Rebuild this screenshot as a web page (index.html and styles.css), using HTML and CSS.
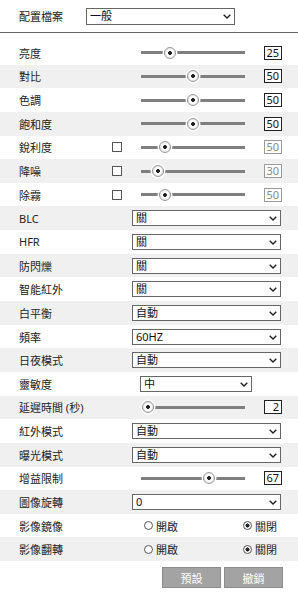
FILE: index.html
```html
<!DOCTYPE html>
<html lang="zh-Hant">
<head>
<meta charset="utf-8">
<title>影像設定</title>
<link rel="stylesheet" href="styles.css">
</head>
<body>
<div class="profile">
  <span class="plabel">配置檔案</span>
  <div class="sel sel-top">
    <select><option>一般</option></select>
    <svg class="chev" width="8" height="5" viewBox="0 0 8 5"><path d="M0.7 0.7 L4 4 L7.3 0.7" fill="none" stroke="#222" stroke-width="1.4"/></svg>
  </div>
</div>

<div class="rows">
  <div class="row">
    <span class="label">亮度</span><span class="slot"></span>
    <input class="rng" type="range" min="0" max="100" value="25">
    <span class="val">25</span>
  </div>
  <div class="row">
    <span class="label">對比</span><span class="slot"></span>
    <input class="rng" type="range" min="0" max="100" value="50">
    <span class="val">50</span>
  </div>
  <div class="row">
    <span class="label">色調</span><span class="slot"></span>
    <input class="rng" type="range" min="0" max="100" value="50">
    <span class="val">50</span>
  </div>
  <div class="row">
    <span class="label">飽和度</span><span class="slot"></span>
    <input class="rng" type="range" min="0" max="100" value="50">
    <span class="val">50</span>
  </div>
  <div class="row">
    <span class="label">銳利度</span><span class="slot"><input class="chk" type="checkbox"></span>
    <input class="rng" type="range" min="0" max="255" value="50">
    <span class="val off">50</span>
  </div>
  <div class="row">
    <span class="label">降噪</span><span class="slot"><input class="chk" type="checkbox"></span>
    <input class="rng" type="range" min="0" max="255" value="30">
    <span class="val off">30</span>
  </div>
  <div class="row">
    <span class="label">除霧</span><span class="slot"><input class="chk" type="checkbox"></span>
    <input class="rng" type="range" min="0" max="255" value="50">
    <span class="val off">50</span>
  </div>
  <div class="row">
    <span class="label wide">BLC</span>
    <div class="sel"><select><option>關</option></select><svg class="chev" width="8" height="5" viewBox="0 0 8 5"><path d="M0.7 0.7 L4 4 L7.3 0.7" fill="none" stroke="#222" stroke-width="1.4"/></svg></div>
  </div>
  <div class="row">
    <span class="label wide">HFR</span>
    <div class="sel"><select><option>關</option></select><svg class="chev" width="8" height="5" viewBox="0 0 8 5"><path d="M0.7 0.7 L4 4 L7.3 0.7" fill="none" stroke="#222" stroke-width="1.4"/></svg></div>
  </div>
  <div class="row">
    <span class="label wide">防閃爍</span>
    <div class="sel"><select><option>關</option></select><svg class="chev" width="8" height="5" viewBox="0 0 8 5"><path d="M0.7 0.7 L4 4 L7.3 0.7" fill="none" stroke="#222" stroke-width="1.4"/></svg></div>
  </div>
  <div class="row">
    <span class="label wide">智能紅外</span>
    <div class="sel"><select><option>關</option></select><svg class="chev" width="8" height="5" viewBox="0 0 8 5"><path d="M0.7 0.7 L4 4 L7.3 0.7" fill="none" stroke="#222" stroke-width="1.4"/></svg></div>
  </div>
  <div class="row">
    <span class="label wide">白平衡</span>
    <div class="sel"><select><option>自動</option></select><svg class="chev" width="8" height="5" viewBox="0 0 8 5"><path d="M0.7 0.7 L4 4 L7.3 0.7" fill="none" stroke="#222" stroke-width="1.4"/></svg></div>
  </div>
  <div class="row">
    <span class="label wide">頻率</span>
    <div class="sel"><select><option>60HZ</option></select><svg class="chev" width="8" height="5" viewBox="0 0 8 5"><path d="M0.7 0.7 L4 4 L7.3 0.7" fill="none" stroke="#222" stroke-width="1.4"/></svg></div>
  </div>
  <div class="row">
    <span class="label wide">日夜模式</span>
    <div class="sel"><select><option>自動</option></select><svg class="chev" width="8" height="5" viewBox="0 0 8 5"><path d="M0.7 0.7 L4 4 L7.3 0.7" fill="none" stroke="#222" stroke-width="1.4"/></svg></div>
  </div>
  <div class="row">
    <span class="label wider">靈敏度</span>
    <div class="sel sel-short"><select><option>中</option></select><svg class="chev" width="8" height="5" viewBox="0 0 8 5"><path d="M0.7 0.7 L4 4 L7.3 0.7" fill="none" stroke="#222" stroke-width="1.4"/></svg></div>
  </div>
  <div class="row">
    <span class="label">延遲時間 (秒)</span><span class="slot"></span>
    <input class="rng" type="range" min="0" max="255" value="2">
    <span class="val">2</span>
  </div>
  <div class="row">
    <span class="label wide">紅外模式</span>
    <div class="sel"><select><option>自動</option></select><svg class="chev" width="8" height="5" viewBox="0 0 8 5"><path d="M0.7 0.7 L4 4 L7.3 0.7" fill="none" stroke="#222" stroke-width="1.4"/></svg></div>
  </div>
  <div class="row">
    <span class="label wide">曝光模式</span>
    <div class="sel"><select><option>自動</option></select><svg class="chev" width="8" height="5" viewBox="0 0 8 5"><path d="M0.7 0.7 L4 4 L7.3 0.7" fill="none" stroke="#222" stroke-width="1.4"/></svg></div>
  </div>
  <div class="row">
    <span class="label">增益限制</span><span class="slot"></span>
    <input class="rng" type="range" min="0" max="100" value="67">
    <span class="val">67</span>
  </div>
  <div class="row">
    <span class="label wide">圖像旋轉</span>
    <div class="sel"><select><option>0</option></select><svg class="chev" width="8" height="5" viewBox="0 0 8 5"><path d="M0.7 0.7 L4 4 L7.3 0.7" fill="none" stroke="#222" stroke-width="1.4"/></svg></div>
  </div>
  <div class="row">
    <span class="label radio-label">影像鏡像</span>
    <label class="opt"><input class="rad" type="radio" name="mirror">開啟</label>
    <label class="opt"><input class="rad" type="radio" name="mirror" checked>關閉</label>
  </div>
  <div class="row">
    <span class="label radio-label">影像翻轉</span>
    <label class="opt"><input class="rad" type="radio" name="flip">開啟</label>
    <label class="opt"><input class="rad" type="radio" name="flip" checked>關閉</label>
  </div>
</div>

<div class="actions">
  <button class="btn">預設</button>
  <button class="btn">撤銷</button>
</div>
</body>
</html>
```

FILE: styles.css
```css
html, body {
  margin: 0;
  padding: 0;
  background: #fff;
}
body {
  width: 298px;
  overflow: hidden;
  font-family: "Noto Sans", "Noto Sans CJK TC", sans-serif;
  font-size: 11px;
  color: #222;
}

.profile {
  display: flex;
  align-items: center;
  height: 33px;
  padding-left: 19px;
  border-bottom: 1px solid #666;
  box-sizing: border-box;
}
.plabel {
  width: 67px;
}

.sel {
  position: relative;
  display: inline-block;
  width: 149px;
  height: 16px;
}
.sel select {
  -webkit-appearance: none;
  appearance: none;
  display: block;
  width: 100%;
  height: 100%;
  margin: 0;
  padding: 0 0 0 3px;
  border: 1px solid #666;
  border-radius: 0;
  background: #fff;
  font-family: "Noto Sans", "Noto Sans CJK TC", sans-serif;
  font-size: 11px;
  line-height: 14px;
  color: #111;
  box-sizing: border-box;
}
.sel-top {
  height: 17px;
}
.sel-short {
  width: 112px;
}
.chev {
  position: absolute;
  right: 4px;
  top: 50%;
  margin-top: -2px;
  pointer-events: none;
}

.rows {
  margin-top: 8px;
}
.row {
  display: flex;
  align-items: center;
  height: 23.65px;
  padding-left: 19px;
}
.row:nth-child(even) {
  background: #f0f0f0;
}
.label {
  width: 93px;
  flex: none;
  white-space: nowrap;
}
.label.wide {
  width: 113px;
}
.label.wider {
  width: 121px;
}
.label.radio-label {
  width: 125px;
}
.slot {
  width: 29px;
  flex: none;
  display: flex;
  align-items: center;
}

.chk {
  -webkit-appearance: none;
  appearance: none;
  width: 10px;
  height: 10px;
  margin: 0;
  border: 1px solid #555;
  background: #fff;
  box-sizing: border-box;
}

.rng {
  -webkit-appearance: none;
  appearance: none;
  width: 104px;
  height: 14px;
  margin: 0;
  padding: 0;
  background: transparent;
  flex: none;
}
.rng::-webkit-slider-runnable-track {
  height: 3px;
  background: #7f7f7f;
}
.rng::-webkit-slider-thumb {
  -webkit-appearance: none;
  appearance: none;
  width: 12px;
  height: 12px;
  margin-top: -4.5px;
  border-radius: 50%;
  border: 1px solid #9c9c9c;
  box-sizing: border-box;
  background: radial-gradient(circle, #222 0 1.6px, #fff 2.2px 3px, #e6e6e6 5px);
  box-shadow: 0 0 0 1.5px #fff;
}

.val {
  margin-left: 19px;
  width: 18px;
  height: 14px;
  border: 1px solid #222;
  box-sizing: border-box;
  text-align: right;
  padding-right: 2px;
  line-height: 12px;
  color: #111;
  background: #fff;
  flex: none;
}
.val.off {
  border-color: #9a9a9a;
  color: #888;
}

.opt {
  display: flex;
  align-items: center;
  width: 99px;
  flex: none;
}
.opt:last-child {
  width: auto;
}
.rad {
  -webkit-appearance: none;
  appearance: none;
  width: 9px;
  height: 9px;
  margin: 0 3px 0 0;
  border: 1px solid #555;
  border-radius: 50%;
  background: #fff;
  box-sizing: border-box;
}
.rad:checked {
  background: radial-gradient(circle, #222 0 1.8px, #fff 2.3px);
}

.actions {
  display: flex;
  justify-content: flex-end;
  gap: 3px;
  padding-right: 15px;
  margin-top: 6px;
}
.btn {
  width: 59px;
  height: 21px;
  margin: 0;
  padding: 0;
  border: 1px solid #8c8c8c;
  border-radius: 0;
  background: #a3a3a3;
  color: #fff;
  font-family: "Noto Sans", "Noto Sans CJK TC", sans-serif;
  font-size: 11px;
}
```
